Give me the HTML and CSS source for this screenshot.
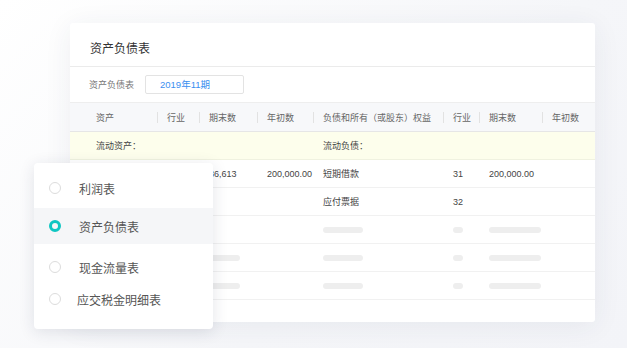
FILE: index.html
```html
<!DOCTYPE html>
<html>
<head>
    <title>资产负债表</title>
    <link rel="stylesheet" href="styles.css">
</head>
<body>
    <div class="stage">
        <div class="report-card">
            <div class="card-title">资产负债表</div>

            <div class="filter-bar">
                <span class="filter-label">资产负债表</span>
                <div class="period-box">2019年11期</div>
            </div>

            <table class="sheet">
                <colgroup>
                    <col style="width: 87px">
                    <col style="width: 42px">
                    <col style="width: 58px">
                    <col style="width: 56px">
                    <col style="width: 130px">
                    <col style="width: 36px">
                    <col style="width: 63px">
                    <col style="width: 53px">
                </colgroup>
                <thead>
                    <tr>
                        <th>资产</th>
                        <th>行业</th>
                        <th>期末数</th>
                        <th>年初数</th>
                        <th>负债和所有（或股东）权益</th>
                        <th>行业</th>
                        <th>期末数</th>
                        <th>年初数</th>
                    </tr>
                </thead>
                <tbody>
                    <tr class="group-row">
                        <td>流动资产：</td>
                        <td></td>
                        <td></td>
                        <td></td>
                        <td>流动负债：</td>
                        <td></td>
                        <td></td>
                        <td></td>
                    </tr>
                    <tr>
                        <td></td>
                        <td></td>
                        <td>86,613</td>
                        <td>200,000.00</td>
                        <td>短期借款</td>
                        <td>31</td>
                        <td>200,000.00</td>
                        <td></td>
                    </tr>
                    <tr>
                        <td></td>
                        <td></td>
                        <td></td>
                        <td></td>
                        <td>应付票据</td>
                        <td>32</td>
                        <td></td>
                        <td></td>
                    </tr>
                    <tr>
                        <td></td>
                        <td></td>
                        <td></td>
                        <td></td>
                        <td><span class="skeleton w40"></span></td>
                        <td><span class="skeleton w10"></span></td>
                        <td><span class="skeleton w52"></span></td>
                        <td></td>
                    </tr>
                    <tr>
                        <td></td>
                        <td></td>
                        <td><span class="skeleton w31"></span></td>
                        <td></td>
                        <td><span class="skeleton w40"></span></td>
                        <td><span class="skeleton w10"></span></td>
                        <td><span class="skeleton w52"></span></td>
                        <td></td>
                    </tr>
                    <tr>
                        <td></td>
                        <td></td>
                        <td><span class="skeleton w31"></span></td>
                        <td></td>
                        <td><span class="skeleton w40"></span></td>
                        <td><span class="skeleton w10"></span></td>
                        <td><span class="skeleton w52"></span></td>
                        <td></td>
                    </tr>
                </tbody>
            </table>
        </div>

        <!-- report type picker floating over the sheet -->
        <div class="report-menu">
            <div class="menu-item item-first">
                <span class="radio"></span>
                <span>利润表</span>
            </div>
            <div class="menu-item active">
                <span class="radio"></span>
                <span>资产负债表</span>
            </div>
            <div class="menu-item item-third">
                <span class="radio"></span>
                <span>现金流量表</span>
            </div>
            <div class="menu-item">
                <span class="radio"></span>
                <span class="tight">应交税金明细表</span>
            </div>
        </div>
    </div>
</body>
</html>
```

FILE: styles.css
```css
body {
    margin: 0;
    font-family: "Liberation Sans", "Noto Sans CJK SC", sans-serif;
    background: #f7f8fa;
    color: #333;
}

.stage {
    position: relative;
    width: 627px;
    height: 348px;
    padding: 23px 0 0 70px;
    box-sizing: border-box;
    background: linear-gradient(135deg, #ffffff 0%, #f5f6f9 60%, #f3f4f8 100%);
}

.report-card {
    width: 525px;
    height: 299px;
    background: #fff;
    border-radius: 3px;
    box-shadow: 0 4px 28px rgba(40, 50, 80, 0.07);
    overflow: hidden;
}

.card-title {
    height: 44px;
    line-height: 52px;
    padding-left: 20px;
    font-size: 12px;
    color: #333;
    border-bottom: 1px solid #ebebeb;
    box-sizing: border-box;
}

.filter-bar {
    display: flex;
    align-items: center;
    height: 35px;
    padding-left: 19px;
}

.filter-label {
    font-size: 9px;
    color: #777;
    width: 56px;
}

.period-box {
    width: 99px;
    height: 19px;
    border: 1px solid #e3e3e3;
    border-radius: 2px;
    box-sizing: border-box;
    padding-left: 14px;
    font-size: 9.5px;
    line-height: 17px;
    color: #3b8ff0;
}

.sheet {
    width: 525px;
    border-collapse: collapse;
    table-layout: fixed;
}

.sheet th,
.sheet td {
    padding: 0 0 0 10px;
    text-align: left;
    font-size: 9px;
    font-weight: normal;
    white-space: nowrap;
    overflow: hidden;
}

.sheet th:first-child,
.sheet td:first-child {
    padding-left: 26px;
}

.sheet th {
    position: relative;
    height: 29px;
    background: #f7f8fa;
    color: #666;
    border-top: 1px solid #eeeeee;
    border-bottom: 1px solid #e6e6e6;
    box-sizing: border-box;
}

.sheet th + th::before {
    content: "";
    position: absolute;
    left: 0;
    top: 9px;
    width: 1px;
    height: 11px;
    background: #e2e2e2;
}

.sheet td {
    height: 28px;
    color: #444;
    border-bottom: 1px solid #f1f1f1;
    box-sizing: border-box;
}

.group-row td {
    background: #fdfeec;
    border-bottom-color: #f0f2e0;
}

.skeleton {
    display: block;
    height: 6px;
    border-radius: 3px;
    background: #eeeeee;
}

.w10 { width: 10px; }
.w31 { width: 31px; }
.w40 { width: 40px; }
.w52 { width: 52px; }

.report-menu {
    position: absolute;
    left: 34px;
    top: 163px;
    width: 179px;
    height: 166px;
    padding-top: 9px;
    box-sizing: border-box;
    background: #fff;
    border-radius: 4px;
    box-shadow: 0 3px 16px rgba(30, 40, 70, 0.12);
}

.menu-item {
    display: flex;
    align-items: center;
    height: 32px;
    padding-left: 15px;
    font-size: 12px;
    color: #555;
}

.menu-item.active {
    height: 36px;
    margin-top: 4px;
    background: #f5f6f8;
}

.item-third {
    margin-top: 7px;
}

.radio {
    width: 12px;
    height: 12px;
    border: 1px solid #dcdcdc;
    border-radius: 50%;
    box-sizing: border-box;
    margin-right: 18px;
    flex-shrink: 0;
}

.active .radio {
    border: 3px solid #0fc6c2;
}

.tight {
    margin-left: -2px;
}
```
